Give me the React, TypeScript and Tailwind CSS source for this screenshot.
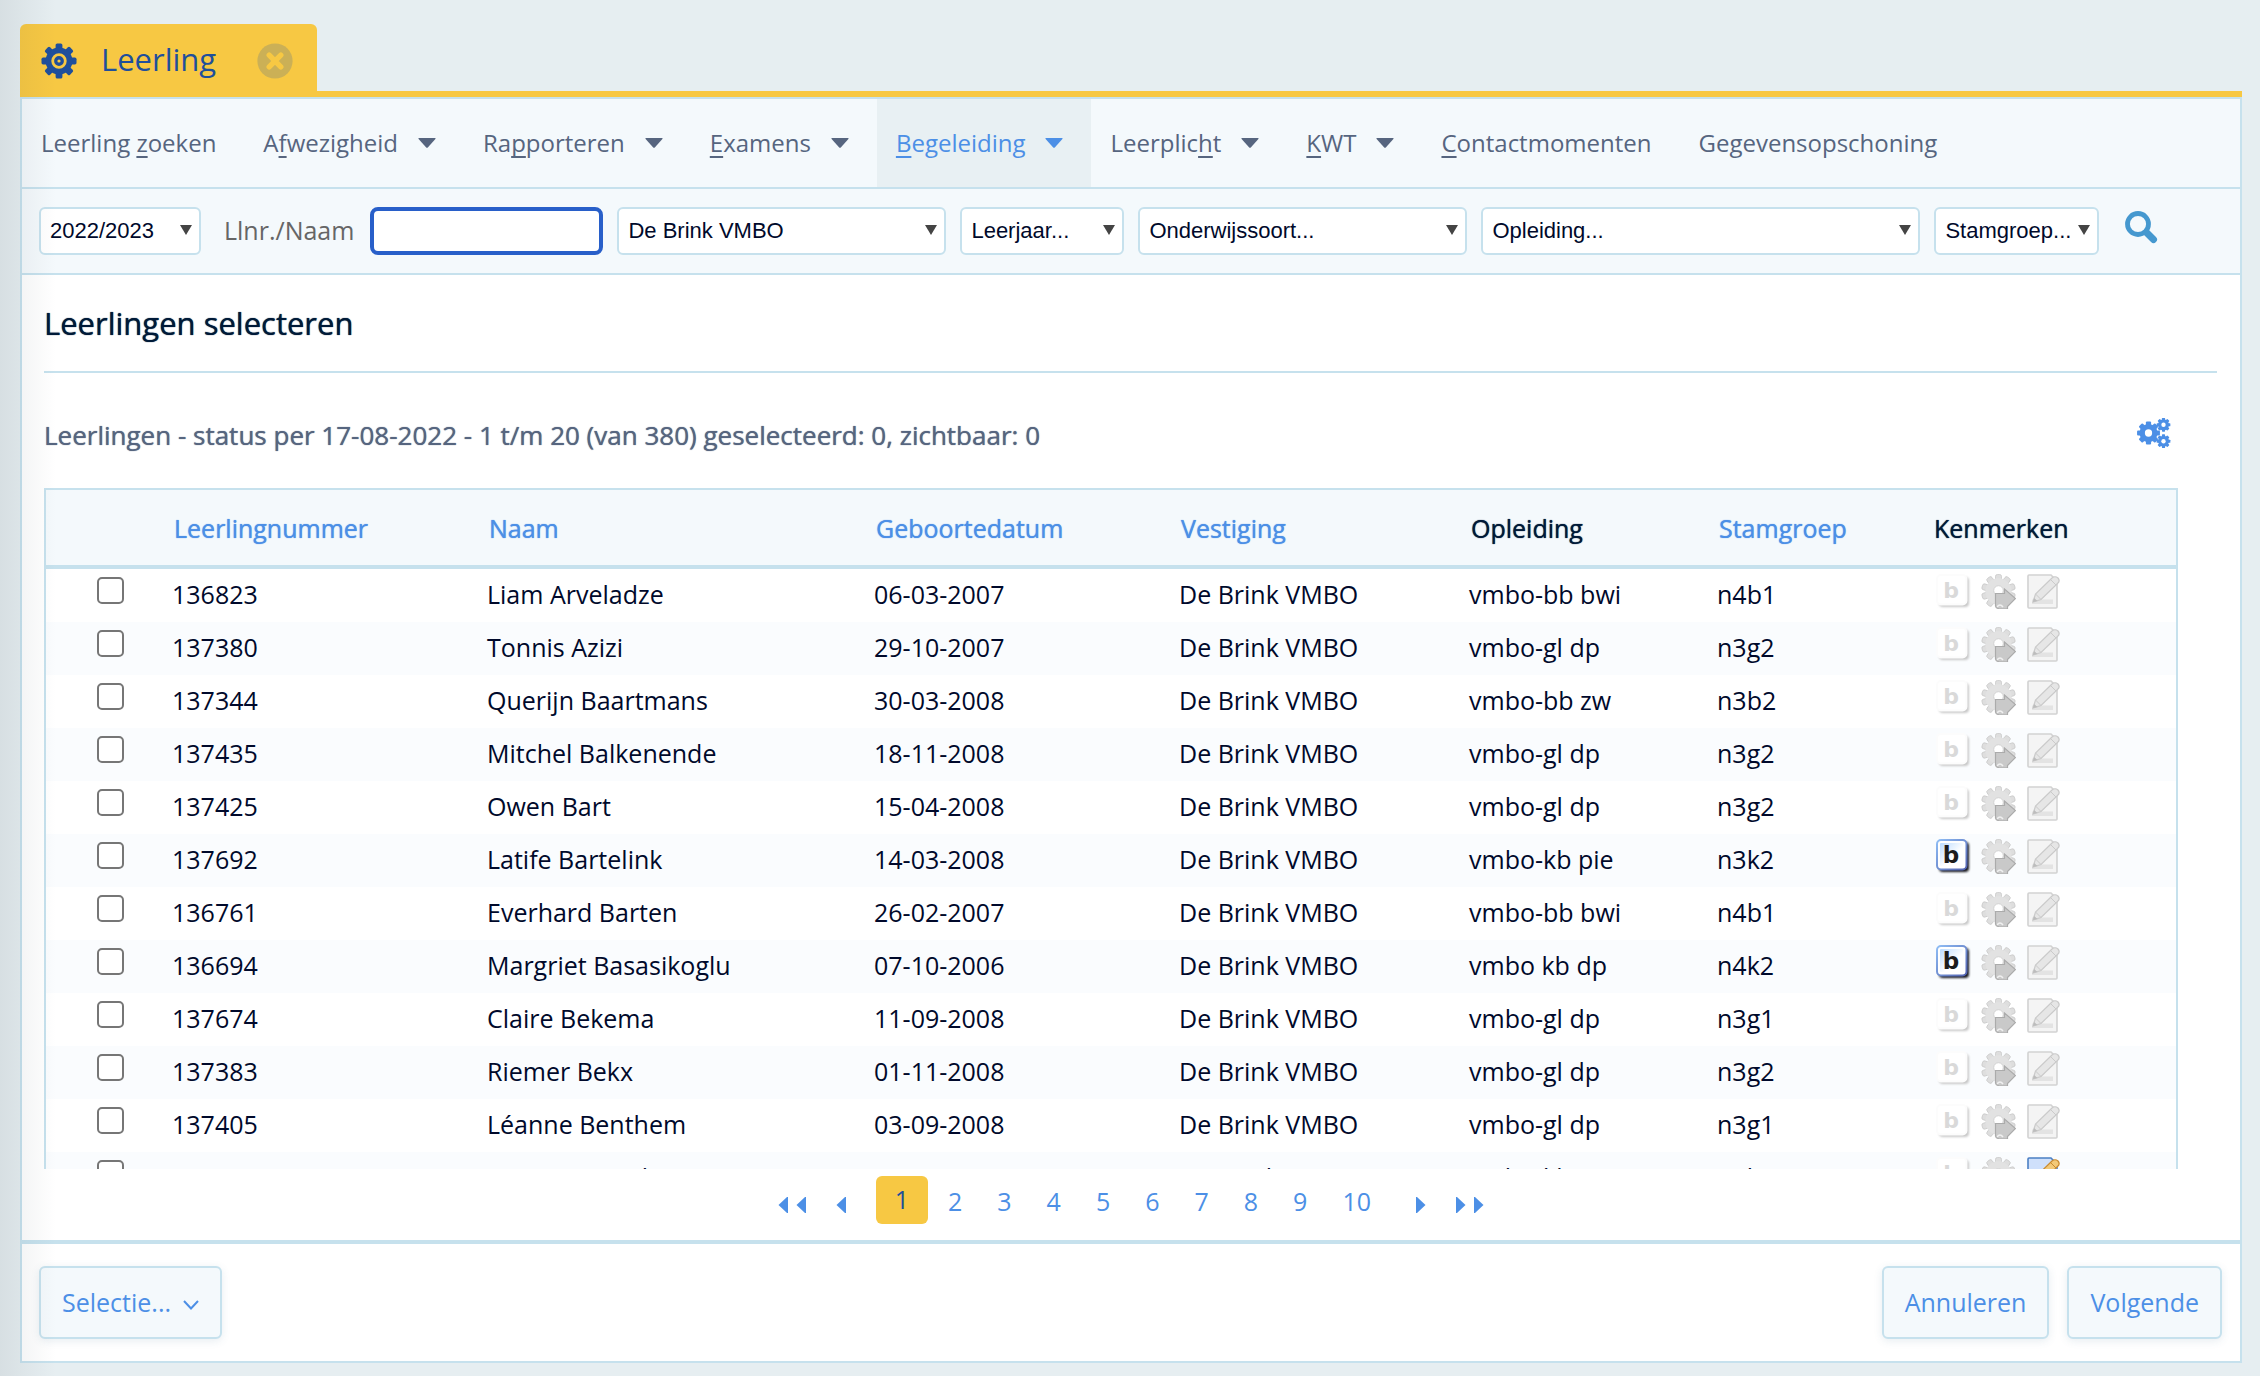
import { ReactNode } from 'react'

type Student = {
  nr: string
  name: string
  born: string
  course: string
  group: string
  guided?: boolean
  note?: boolean
}

const students: Student[] = [
  { nr: '136823', name: 'Liam Arveladze', born: '06-03-2007', course: 'vmbo-bb bwi', group: 'n4b1' },
  { nr: '137380', name: 'Tonnis Azizi', born: '29-10-2007', course: 'vmbo-gl dp', group: 'n3g2' },
  { nr: '137344', name: 'Querijn Baartmans', born: '30-03-2008', course: 'vmbo-bb zw', group: 'n3b2' },
  { nr: '137435', name: 'Mitchel Balkenende', born: '18-11-2008', course: 'vmbo-gl dp', group: 'n3g2' },
  { nr: '137425', name: 'Owen Bart', born: '15-04-2008', course: 'vmbo-gl dp', group: 'n3g2' },
  { nr: '137692', name: 'Latife Bartelink', born: '14-03-2008', course: 'vmbo-kb pie', group: 'n3k2', guided: true },
  { nr: '136761', name: 'Everhard Barten', born: '26-02-2007', course: 'vmbo-bb bwi', group: 'n4b1' },
  { nr: '136694', name: 'Margriet Basasikoglu', born: '07-10-2006', course: 'vmbo kb dp', group: 'n4k2', guided: true },
  { nr: '137674', name: 'Claire Bekema', born: '11-09-2008', course: 'vmbo-gl dp', group: 'n3g1' },
  { nr: '137383', name: 'Riemer Bekx', born: '01-11-2008', course: 'vmbo-gl dp', group: 'n3g2' },
  { nr: '137405', name: 'Léanne Benthem', born: '03-09-2008', course: 'vmbo-gl dp', group: 'n3g1' },
  { nr: '137518', name: 'Roan van Berkum', born: '22-05-2008', course: 'vmbo-kb pie', group: 'n3k2', note: true },
]

const TEETH = [0, 45, 90, 135, 180, 225, 270, 315]

const Cog = ({ x, y, scale }: { x: number; y: number; scale: number }) => (
  <g transform={`translate(${x} ${y}) scale(${scale})`}>
    {TEETH.map((a) => (
      <rect key={a} x="-4" y="-17.6" width="8" height="8" rx="1.6" transform={`rotate(${a})`} />
    ))}
    <circle r="14" />
    <circle r="5.6" fill="#fff" />
  </g>
)

const TabCog = () => (
  <svg className="size-9" viewBox="-18 -18 36 36" fill="#1f4f9b" aria-hidden="true">
    {TEETH.map((a) => (
      <rect key={a} x="-3.4" y="-17.5" width="6.8" height="8" rx="1.6" transform={`rotate(${a})`} />
    ))}
    <circle r="13.4" />
    <circle r="6.3" fill="none" stroke="#f7c843" strokeWidth="2.8" />
    <circle r="1.6" fill="#f7c843" />
  </svg>
)

const Caret = () => (
  <svg className="h-[10px] w-[18px] shrink-0" viewBox="0 0 18 10" fill="currentColor" aria-hidden="true">
    <path d="M1 0h16q1 0 .4.9L9.8 9.4q-.8.8-1.6 0L.6.9Q0 0 1 0z" />
  </svg>
)

const MenuItem = ({ children, menu, active }: { children: ReactNode; menu?: boolean; active?: boolean }) => (
  <a
    href="#"
    className={
      active
        ? 'flex h-full items-center gap-5 bg-[#e8f0f3] pl-[19px] pr-7 text-[#4c8fe6]'
        : 'flex h-full items-center gap-5 pl-[19px] pr-7 text-[#56657f]'
    }
  >
    <span>{children}</span>
    {menu && <Caret />}
  </a>
)

const Key = ({ children }: { children: string }) => (
  <span className="underline decoration-2 underline-offset-4 [text-decoration-skip-ink:none]">{children}</span>
)

const Filter = ({ label, width }: { label: string; width: string }) => (
  <div className={`relative h-12 shrink-0 ${width}`}>
    <select
      aria-label={label}
      className="size-full appearance-none rounded-md border-2 border-[#c6e1ed] bg-white pl-[9px] font-['Liberation_Sans',sans-serif] text-[22px] text-[#00092b]"
    >
      <option>{label}</option>
    </select>
    <svg className="pointer-events-none absolute right-[9px] top-[18px] h-[10px] w-3" viewBox="0 0 12 10" fill="#444" aria-hidden="true">
      <path d="M0 0h12L6 10z" />
    </svg>
  </div>
)

const GuidanceIcon = ({ on }: { on?: boolean }) => (
  <svg className="size-[35px]" viewBox="0 0 35 35" aria-hidden="true">
    <defs>
      <linearGradient id="guideFill" x1="0" y1="0" x2="1" y2="1">
        <stop offset="0" stopColor="#bcdcff" />
        <stop offset=".6" stopColor="#fff" />
      </linearGradient>
      <linearGradient id="guideEdge" x1="0" y1="0" x2="1" y2="1">
        <stop offset="0" stopColor="#8fbdf5" />
        <stop offset="1" stopColor="#5262b0" />
      </linearGradient>
      <filter id="guideShadow" x="-20%" y="-20%" width="150%" height="150%">
        <feGaussianBlur stdDeviation="0.9" />
      </filter>
    </defs>
    <rect x="3" y="3" width="30" height="30" rx="4" fill={on ? '#15161c' : '#c8c8c8'} filter="url(#guideShadow)" />
    <rect x="1" y="1" width="29.500" height="29.500" rx="4" fill="#fff" stroke={on ? 'url(#guideEdge)' : '#fcfcfc'} strokeWidth="2" />
    {on && <rect x="4" y="4" width="23" height="23" rx="1" fill="url(#guideFill)" />}
    <text
      x="15"
      y="24"
      textAnchor="middle"
      className={
        on
          ? "fill-[#1c1c1c] font-['DejaVu_Sans',sans-serif] text-[23px] font-bold"
          : "fill-[#d9d9d9] font-['DejaVu_Sans',sans-serif] text-[22px] font-bold"
      }
    >
      b
    </text>
  </svg>
)

const CareIcon = () => (
  <svg className="size-[35px]" viewBox="0 0 35 35" aria-hidden="true">
    <g fill="#dedede" stroke="#cacaca" strokeWidth=".8">
      {[0, 36, 72, 108, 144, 180, 216, 252, 288, 324].map((a) => (
        <rect key={a} x="14.500" y=".5" width="6" height="9" rx="1.8" transform={`rotate(${a} 17.5 17.5)`} />
      ))}
    </g>
    <circle cx="17.500" cy="17.500" r="13.200" fill="#e2e2e2" />
    <circle cx="17.500" cy="16.500" r="4.800" fill="#fff" stroke="#d2d2d2" />
    <path d="M14.500 19.500h9v-4.500l11 9.500-8 8v2.500h-9l-3-3z" fill="#c9c9c9" stroke="#ababab" strokeWidth="1.200" />
    <path d="M16 33q3-4 6 0" fill="none" stroke="#f0f0f0" strokeWidth="1.500" />
  </svg>
)

const NoteIcon = ({ on }: { on?: boolean }) => (
  <svg className="size-[35px]" viewBox="0 0 35 35" aria-hidden="true">
    <path
      d="M3 1h22l6 6v26q0 1-1 1H3q-1 0-1-1V2q0-1 1-1z"
      fill={on ? '#cfe0fb' : '#f4f4f4'}
      stroke={on ? '#4b7fc4' : '#d2d2d2'}
      strokeWidth="1.600"
    />
    <path d="M6 25.500h21v4.500H6z" fill="#e3e3e3" />
    <path
      d="M7 28l2.500-8L26 4q3-2.500 6 0 2.500 3-.5 5.500L15 25.500z"
      fill={on ? '#f3c978' : '#e6e6e6'}
      stroke={on ? '#c98a2e' : '#cacaca'}
      strokeWidth="1.200"
    />
    <path d="M9.500 20l5.500 5.500M25 6l5 5" fill="none" stroke={on ? '#c98a2e' : '#cacaca'} />
    <path d="M7 28l1-4 3.500 3z" fill={on ? '#7a5a2a' : '#bcbcbc'} />
  </svg>
)

const Arrow = ({ flip }: { flip?: boolean }) => (
  <svg className="h-4 w-[10px]" viewBox="0 0 10 16" fill="currentColor" aria-hidden="true">
    <path d={flip ? 'M0 0l1 0 8.500 8L1 16H0z' : 'M10 0L9 0 .5 8 9 16h1z'} />
  </svg>
)

const headClass = 'border-b-4 border-[#c6e1ed] pl-[10px] pt-[2px] font-medium [text-shadow:0_0_1px_currentColor]'
const cellClass = 'pb-[2px] pl-2'

const SortHead = ({ children }: { children: string }) => (
  <th className={headClass}>
    <a href="#" className="text-[#4c8fe6]">{children}</a>
  </th>
)

const buttonClass =
  'flex h-[73px] items-center rounded-md border-2 border-[#c6e1ed] bg-[#f4f9fc] px-[21px] text-[25px] text-[#4c8fe6] shadow-[0_2px_8px_rgba(60,110,140,0.12)]'

const App = () => {
  return (
    <div className="relative flex h-screen flex-col bg-[#e6eef1] pb-[13px] pl-5 pr-[18px] pt-6 font-['Open_Sans',sans-serif] text-2xl text-[#00092b]">
      <div className="flex shrink-0 border-b-6 border-[#f7c843]">
        <div className="flex h-[67px] w-[297px] items-center rounded-t-md bg-[#f7c843] pl-[21px] pr-6 pt-[6px]">
          <TabCog />
          <span className="ml-6 pb-1 text-[31px] leading-10 text-[#1f4f9b]">Leerling</span>
          <button className="ml-auto" aria-label="Tabblad sluiten">
            <svg className="size-9" viewBox="-18 -18 36 36" aria-hidden="true">
              <circle r="17.6" fill="#cbb056" />
              <path d="M-5.800-5.800L5.800 5.800M5.800-5.800L-5.800 5.800" stroke="#f7c843" strokeWidth="5.400" strokeLinecap="round" />
            </svg>
          </button>
        </div>
      </div>

      <div className="flex min-h-0 flex-1 flex-col border-2 border-[#c6e1ed] bg-white">
        <nav className="flex h-[90px] shrink-0 items-center border-b-2 border-[#c6e1ed] bg-[#f4f9fc]">
          <MenuItem>Leerling <Key>z</Key>oeken</MenuItem>
          <MenuItem menu>A<Key>f</Key>wezigheid</MenuItem>
          <MenuItem menu>Ra<Key>p</Key>porteren</MenuItem>
          <MenuItem menu><Key>E</Key>xamens</MenuItem>
          <MenuItem menu active><Key>B</Key>egeleiding</MenuItem>
          <MenuItem menu>Leerplic<Key>h</Key>t</MenuItem>
          <MenuItem menu><Key>K</Key>WT</MenuItem>
          <MenuItem><Key>C</Key>ontactmomenten</MenuItem>
          <MenuItem>Gegevensopschoning</MenuItem>
        </nav>

        <form className="flex h-[86px] shrink-0 items-center gap-[14px] border-b-2 border-[#c6e1ed] bg-[#f4f9fc] pl-[17px]">
          <Filter label="2022/2023" width="w-[162px]" />
          <label htmlFor="search" className="ml-[9px] text-[25px] text-[#666]">Llnr./Naam</label>
          <input
            id="search"
            type="text"
            className="ml-[2px] h-12 w-[233px] shrink-0 rounded-lg border-4 border-[#285fc9] bg-white px-2 outline-none"
          />
          <Filter label="De Brink VMBO" width="w-[329px]" />
          <Filter label="Leerjaar..." width="w-[164px]" />
          <Filter label="Onderwijssoort..." width="w-[329px]" />
          <Filter label="Opleiding..." width="w-[439px]" />
          <Filter label="Stamgroep..." width="w-[165px]" />
          <button type="button" className="mb-2 ml-[10px]" aria-label="Zoeken">
            <svg className="size-9" viewBox="0 0 36 36" fill="none" stroke="#4598cf" aria-hidden="true">
              <circle cx="15" cy="15" r="10.500" strokeWidth="4.800" />
              <path d="M23.500 23.500l7 7" strokeWidth="7" strokeLinecap="round" />
            </svg>
          </button>
        </form>

        <div className="flex min-h-0 flex-1 flex-col pl-[22px]">
          <h1 className="mr-[23px] flex h-[98px] shrink-0 items-center border-b-2 border-[#c6e1ed] pt-[2px] text-[31px] font-medium text-[#001a38] [text-shadow:0_0_1px_currentColor]">
            Leerlingen selecteren
          </h1>
          <div className="mr-[62px] flex h-[115px] shrink-0 items-center justify-between pt-[10px]">
            <h2 className="text-[26px] font-medium text-[#56657f] [text-shadow:0_0_1px_currentColor]">
              Leerlingen - status per 17-08-2022 - 1 t/m 20 (van 380) geselecteerd: 0, zichtbaar: 0
            </h2>
            <button className="mb-[6px] mr-[7px]" aria-label="Instellingen">
              <svg className="h-[30px] w-[34px]" viewBox="0 0 34 30" fill="#4c8fe6" aria-hidden="true">
                <Cog x={11.5} y={15} scale={0.65} />
                <Cog x={26.5} y={6.8} scale={0.39} />
                <Cog x={26.5} y={23.2} scale={0.39} />
              </svg>
            </button>
          </div>

          <div className="mr-[62px] min-h-0 flex-1 overflow-hidden border-2 border-b-0 border-[#c6e1ed]">
            <table className="w-full table-fixed border-separate border-spacing-0 text-left text-[25px]">
              <colgroup>
                <col className="w-[118px]" />
                <col className="w-[315px]" />
                <col className="w-[387px]" />
                <col className="w-[305px]" />
                <col className="w-[290px]" />
                <col className="w-[248px]" />
                <col className="w-[215px]" />
                <col />
              </colgroup>
              <thead>
                <tr className="h-[79px] bg-[#f4f9fc] text-[#001a38]">
                  <th className={headClass}></th>
                  <SortHead>Leerlingnummer</SortHead>
                  <SortHead>Naam</SortHead>
                  <SortHead>Geboortedatum</SortHead>
                  <SortHead>Vestiging</SortHead>
                  <th className={headClass}>Opleiding</th>
                  <SortHead>Stamgroep</SortHead>
                  <th className={headClass}>Kenmerken</th>
                </tr>
              </thead>
              <tbody>
                {students.map((s) => (
                  <tr key={s.nr} className="h-[53px] even:bg-[#fafcfe]">
                    <td className="pl-[51px] pt-2 align-top">
                      <input
                        type="checkbox"
                        aria-label={s.name}
                        className="block size-[27px] appearance-none rounded-[5px] border-2 border-[#767676] bg-white"
                      />
                    </td>
                    <td className={cellClass}>{s.nr}</td>
                    <td className={cellClass}>{s.name}</td>
                    <td className={cellClass}>{s.born}</td>
                    <td className={cellClass}>De Brink VMBO</td>
                    <td className={cellClass}>{s.course}</td>
                    <td className={cellClass}>{s.group}</td>
                    <td className="pl-3 pt-[5px] align-top">
                      <div className="flex gap-[10px]">
                        <GuidanceIcon on={s.guided} />
                        <CareIcon />
                        <NoteIcon on={s.note} />
                      </div>
                    </td>
                  </tr>
                ))}
              </tbody>
            </table>
          </div>
        </div>

        <div className="flex h-[75px] shrink-0 items-center justify-center border-b-4 border-[#c6e1ed] pb-[9px] text-[25px] text-[#4c8fe6]">
          <div className="flex items-center pt-[10px]">
            <button className="flex gap-2 px-[15px]" aria-label="Eerste pagina"><Arrow /><Arrow /></button>
            <button className="pl-[15px] pr-[30px]" aria-label="Vorige pagina"><Arrow /></button>
          </div>
          <button className="mr-[3px] h-12 w-[52px] rounded-md bg-[#f7c843] text-[#1f4f9b]">1</button>
          <div className="flex items-center gap-px pt-1">
            {['2', '3', '4', '5', '6', '7', '8', '9', '10'].map((p) => (
              <button key={p} className="px-[17px]">{p}</button>
            ))}
          </div>
          <div className="flex items-center pt-[10px]">
            <button className="pl-7 pr-[15px]" aria-label="Volgende pagina"><Arrow flip /></button>
            <button className="flex gap-2 px-[15px]" aria-label="Laatste pagina"><Arrow flip /><Arrow flip /></button>
          </div>
        </div>

        <div className="flex h-[117px] shrink-0 items-center gap-[18px] pl-[17px] pr-[18px]">
          <button className={buttonClass}>
            Selectie...
            <svg className="ml-3 mt-1 h-[10px] w-4" viewBox="0 0 16 10" fill="none" stroke="currentColor" strokeWidth="2" aria-hidden="true">
              <path d="M1 1l7 7.500L15 1" />
            </svg>
          </button>
          <button className={`ml-auto ${buttonClass}`}>Annuleren</button>
          <button className={buttonClass}>Volgende</button>
        </div>
      </div>

      {/* soft shade along the left window edge */}
      <div className="pointer-events-none absolute inset-y-0 left-0 w-14 bg-linear-to-r from-[#28323c]/8 to-transparent" />
    </div>
  )
}

export default App
